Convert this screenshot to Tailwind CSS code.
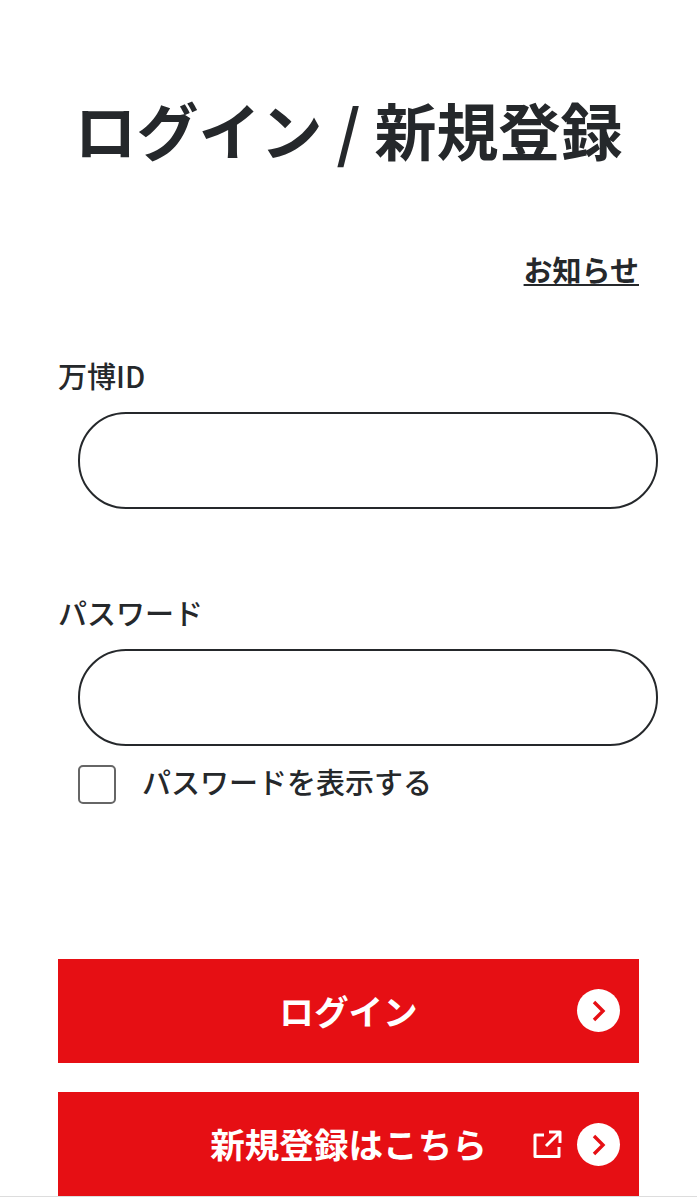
<!DOCTYPE html>
<html lang="ja">
<head>
    <meta charset="UTF-8">
    <meta name="viewport" content="width=device-width, initial-scale=1.0">
    <title>ログイン</title>
    <script src="https://cdn.jsdelivr.net/npm/@tailwindcss/browser@4"></script>
</head>
<body class="bg-white text-[#25282b] font-['Noto_Sans_CJK_JP','Noto_Sans',sans-serif] overflow-hidden h-[1200px]">
    <div class="px-[58px] h-[1197px] overflow-hidden border-b border-[#dddddd]">
        <h1 class="text-center text-[62px] font-bold leading-[72px] pt-[93px] whitespace-nowrap -mx-[20px]">ログイン / 新規登録</h1>
        <div class="text-right mt-[83px]">
            <a href="#" class="text-[29px] font-bold underline leading-[42px]">お知らせ</a>
        </div>
        <label class="block text-[29px] font-medium leading-[42px] mt-[64px]">万博ID</label>
        <input type="text" class="block w-[580px] h-[97px] ml-[20px] mt-[16px] border-2 border-[#25282b] rounded-[48px] bg-white">
        <label class="block text-[29px] font-medium leading-[42px] mt-[82px]">パスワード</label>
        <input type="password" class="block w-[580px] h-[97px] ml-[20px] mt-[16px] border-2 border-[#25282b] rounded-[48px] bg-white">
        <div class="flex items-center ml-[20px] mt-[19px]">
            <span class="w-[38px] h-[39px] border-2 border-[#666666] rounded-[5px]"></span>
            <span class="ml-[26px] text-[29px] font-medium leading-[39px] -mt-[6px]">パスワードを表示する</span>
        </div>
        <button class="relative block w-full h-[104px] mt-[155px] bg-[#e60f14] text-white text-[34.6px] font-bold text-center">
            ログイン
            <span class="absolute right-[19px] top-[30px] w-[43px] h-[43px] rounded-full bg-white flex items-center justify-center">
                <svg width="18" height="22" viewBox="0 0 18 22" fill="none"><path d="M4 2l9 9-9 9" stroke="#e60f14" stroke-width="3.400"/></svg>
            </span>
        </button>
        <button class="relative block w-full h-[104px] mt-[29px] bg-[#e60f14] text-white text-[34.6px] font-bold text-center">
            新規登録はこちら
            <svg class="absolute right-[77px] top-[38px]" width="29" height="29" viewBox="0 0 29 29" fill="none" stroke="white" stroke-width="3" stroke-linejoin="round"><path d="M11 5H2v21.500h24V17M16 2h11v11M26.500 2.500L13 16"/></svg>
            <span class="absolute right-[19px] top-[31px] w-[43px] h-[43px] rounded-full bg-white flex items-center justify-center">
                <svg width="18" height="22" viewBox="0 0 18 22" fill="none"><path d="M4 2l9 9-9 9" stroke="#e60f14" stroke-width="3.400"/></svg>
            </span>
        </button>
    </div>
</body>
</html>
